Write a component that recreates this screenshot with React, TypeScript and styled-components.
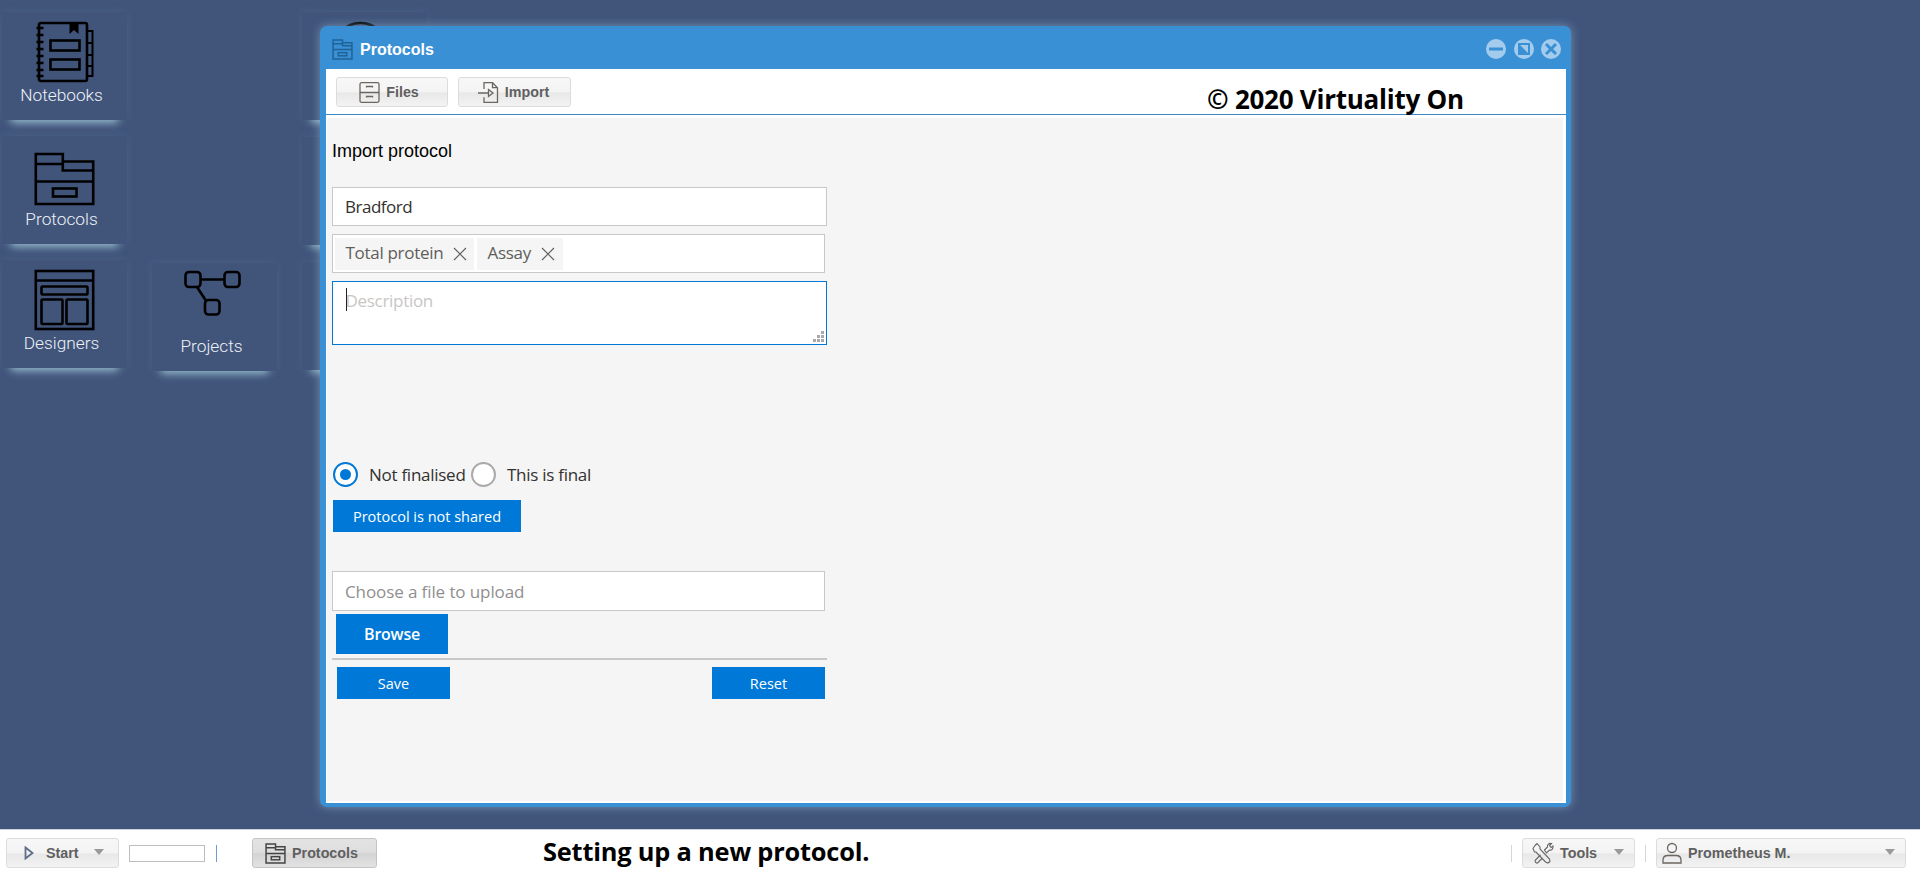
import React from "react";
import styled, { createGlobalStyle } from "styled-components";

const Global = createGlobalStyle`
  html, body { margin: 0; padding: 0; height: 100%; overflow: hidden; }
  #root { height: 100%; }
  * { box-sizing: border-box; }
`;

const Page = styled.div`
  width: 1920px;
  height: 876px;
  display: flex;
  flex-direction: column;
  font-family: "Open Sans", "Liberation Sans", sans-serif;
`;

const Desktop = styled.main`
  position: relative;
  height: 829px;
  background: #41557b;
  overflow: hidden;
  display: flex;
  gap: 25px;
  padding-left: 2px;
`;

const TileColumn = styled.div<{ $top: number; $gap: number }>`
  width: 125px;
  display: flex;
  flex-direction: column;
  gap: ${(p) => p.$gap}px;
  padding-top: ${(p) => p.$top}px;
`;

const Tile = styled.div`
  width: 125px;
  height: 108px;
  background: #41557b;
  box-shadow: 0 12px 8px -9px rgba(165, 205, 220, 0.8), 0 0 9px rgba(120, 150, 180, 0.16);
  padding-top: 4px;
  display: flex;
  flex-direction: column;
  align-items: center;
  flex: none;
`;

const TileIcon = styled.svg`
  width: 64px;
  height: 68px;
  display: block;
  fill: none;
  stroke: #000;
  stroke-width: 2.6;
`;

const TileLabel = styled.div`
  height: 22px;
  line-height: 22px;
  margin-right: 6px;
  font-family: Roboto, sans-serif;
  font-weight: 300;
  font-size: 17.3px;
  color: #eef2f7;
`;

const Window = styled.section`
  position: absolute;
  left: 320px;
  top: 26px;
  width: 1251px;
  height: 781px;
  background: #3a90d4;
  border-radius: 7px;
  box-shadow: 0 0 10px rgba(150, 185, 215, 0.6);
  padding: 0 5px 4px 6px;
  display: flex;
  flex-direction: column;
`;

const TitleBar = styled.header`
  height: 43px;
  flex: none;
  display: flex;
  align-items: center;
  padding-left: 6px;
  padding-top: 4px;
  gap: 7px;
`;

const WindowTitle = styled.div`
  font-family: "Liberation Sans", sans-serif;
  font-weight: 700;
  font-size: 16px;
  color: #fff;
`;

const WindowControls = styled.div`
  margin-left: auto;
  margin-right: 5px;
  margin-top: -1px;
  display: flex;
  gap: 7.5px;
`;

const ControlIcon = styled.svg`
  width: 20px;
  height: 20px;
  display: block;
`;

const WindowBody = styled.div`
  flex: 1;
  background: #fff;
  display: flex;
  flex-direction: column;
  min-height: 0;
`;

const Toolbar = styled.div`
  height: 46px;
  flex: none;
  border-bottom: 1px solid #3f86c4;
  padding: 8px 0 0 10px;
  display: flex;
  gap: 10px;
  position: relative;
`;

const ButtonFace = styled.button<{ $pressed?: boolean; $width: number; $justify?: string; $inset?: number; $gap?: number }>`
  width: ${(p) => p.$width}px;
  height: 30px;
  padding: 0 ${(p) => (p.$justify ? 0 : (p.$inset ?? 0))}px 0 ${(p) => (p.$justify ? (p.$inset ?? 0) : 0)}px;
  gap: ${(p) => p.$gap ?? 6}px;
  border: 1px solid ${(p) => (p.$pressed ? "#c4c4c4" : "#dcdcdc")};
  border-radius: 3px;
  background: ${(p) =>
    p.$pressed
      ? "linear-gradient(#e3e3e3 0, #dedede 48%, #d4d4d4 52%, #e2e2e2 100%)"
      : "linear-gradient(#f7f7f7 0, #f4f4f4 48%, #e8e8e8 54%, #f3f3f3 100%)"};
  display: flex;
  align-items: center;
  justify-content: ${(p) => p.$justify ?? "center"};
  font-family: "Liberation Sans", sans-serif;
  font-weight: 700;
  font-size: 14.3px;
  color: #5f5f5f;
  position: relative;
`;

const ActiveWindowButton = styled(ButtonFace)`
  margin-left: 35px;
`;

const SmallIcon = styled.svg`
  width: 21px;
  height: 21px;
  display: block;
  fill: none;
  stroke: #6b6660;
  stroke-width: 1.3;
  flex: none;
`;

const Copyright = styled.div`
  position: absolute;
  left: 881px;
  top: 14px;
  font-weight: 700;
  font-size: 26px;
  line-height: 33px;
  color: #000;
  white-space: nowrap;
  letter-spacing: -0.25px;
`;

const Content = styled.div`
  flex: 1;
  margin: 3px 3px 2px 1px;
  background: #f5f5f5;
  padding: 0 0 0 5px;
  display: flex;
  flex-direction: column;
  align-items: flex-start;
`;

const Heading = styled.h2`
  margin: 22px 0 0;
  height: 22px;
  line-height: 22px;
  font-family: "Liberation Sans", sans-serif;
  font-weight: 400;
  font-size: 18px;
  color: #000;
`;

const Field = styled.div<{ $width: number; $height?: number; $muted?: boolean }>`
  width: ${(p) => p.$width}px;
  height: ${(p) => p.$height ?? 39}px;
  background: #fff;
  border: 1.5px solid #c8c8c8;
  padding: 0 12px;
  display: flex;
  align-items: center;
  font-size: 17px;
  color: ${(p) => (p.$muted ? "#8f8f8f" : "#323130")};
  letter-spacing: -0.3px;
`;

const NameField = styled(Field)`
  margin-top: 25px;
  letter-spacing: -0.5px;
`;

const TagField = styled(Field)`
  margin-top: 8px;
  padding: 1px 2px;
  gap: 3px;
`;

const Tag = styled.span<{ $width: number }>`
  width: ${(p) => p.$width}px;
  height: 32px;
  background: #f5f5f5;
  color: #605e5c;
  display: flex;
  align-items: center;
  padding: 0 0 2px 10.5px;
  gap: 10px;
  white-space: nowrap;
`;

const TagClose = styled.svg`
  width: 14px;
  height: 14px;
  margin-top: 2px;
  stroke: #605e5c;
  stroke-width: 1.1;
  fill: none;
`;

const DescriptionField = styled.div`
  width: 495px;
  height: 64px;
  margin-top: 8px;
  background: #fff;
  border: 1.5px solid #0078d7;
  position: relative;
  padding: 7px 12.5px;
  font-size: 17px;
  line-height: 23px;
  letter-spacing: -0.3px;
  color: #c8c6c4;
`;

const Caret = styled.span`
  position: absolute;
  left: 12.5px;
  top: 6px;
  width: 1px;
  height: 23px;
  background: #222;
`;

const Grip = styled.svg`
  position: absolute;
  right: 2px;
  bottom: 2px;
  width: 11px;
  height: 11px;
  fill: #a9a9a9;
`;

const RadioRow = styled.div`
  margin-top: 117px;
  margin-left: 1px;
  height: 25px;
  display: flex;
  align-items: center;
`;

const RadioCircle = styled.span<{ $on?: boolean }>`
  width: 25px;
  height: 25px;
  flex: none;
  border-radius: 50%;
  background: #fff;
  border: 2px solid ${(p) => (p.$on ? "#0078d7" : "#aaa")};
  display: flex;
  align-items: center;
  justify-content: center;
  &::after {
    content: "";
    display: ${(p) => (p.$on ? "block" : "none")};
    width: 11px;
    height: 11px;
    border-radius: 50%;
    background: #0078d7;
  }
`;

const RadioText = styled.span<{ $width: number }>`
  width: ${(p) => p.$width}px;
  padding-left: 11px;
  font-size: 17px;
  letter-spacing: -0.27px;
  color: #323130;
  white-space: nowrap;
`;

const PrimaryButton = styled.button<{ $width: number; $height?: number; $size?: number; $bold?: boolean }>`
  width: ${(p) => p.$width}px;
  height: ${(p) => p.$height ?? 32}px;
  border: 0;
  padding: 0;
  background: #0078d7;
  color: #fff;
  font-family: "Open Sans", sans-serif;
  font-size: ${(p) => p.$size ?? 14.5}px;
  font-weight: ${(p) => (p.$bold ? 600 : 400)};
  flex: none;
`;

const ShareButton = styled(PrimaryButton)`
  margin-top: 13px;
  margin-left: 1px;
`;

const UploadField = styled(Field)`
  margin-top: 39px;
  height: 40px;
  letter-spacing: -0.1px;
`;

const BrowseButton = styled(PrimaryButton)`
  margin-top: 3px;
  margin-left: 4px;
  letter-spacing: -0.25px;
`;

const Divider = styled.hr`
  width: 495px;
  height: 2px;
  margin: 4px 0 0 0;
  border: 0;
  background: #c8c8c8;
`;

const FormActions = styled.div`
  width: 488px;
  margin: 7px 0 0 5px;
  display: flex;
  justify-content: space-between;
`;

const Taskbar = styled.footer`
  height: 47px;
  flex: none;
  background: #fff;
  border-top: 1px solid #c9d0da;
  display: flex;
  align-items: flex-start;
  padding: 8px 14px 0 6px;
  position: relative;
`;

const DropCaret = styled.span<{ $right: number }>`
  position: absolute;
  right: ${(p) => p.$right}px;
  top: 10px;
  width: 0;
  height: 0;
  border-left: 5.5px solid transparent;
  border-right: 5.5px solid transparent;
  border-top: 6px solid #999;
`;

const TaskInput = styled.div`
  width: 76px;
  height: 17px;
  margin: 7px 0 0 10px;
  border: 1px solid #bdbdbd;
  background: #fff;
`;

const BarDivider = styled.span<{ $color: string; $left: number; $right?: number }>`
  width: 1px;
  height: 17px;
  margin: 7px ${(p) => p.$right ?? 0}px 0 ${(p) => p.$left}px;
  background: ${(p) => p.$color};
  flex: none;
`;

const Caption = styled.div`
  position: absolute;
  left: 543px;
  top: 5px;
  font-weight: 700;
  font-size: 25.4px;
  line-height: 33px;
  color: #000;
  white-space: nowrap;
  letter-spacing: -0.2px;
`;

const Spacer = styled.div`
  flex: 1;
`;

const FileCabinet = () => (
  <SmallIcon viewBox="0 0 21 21">
    <rect x="1" y="0.700" width="19" height="19.600" rx="1.500" />
    <path d="M1 10.500h19M7.500 5.500V4.500h6v1M7.500 15.500v-1h6v1" />
  </SmallIcon>
);

const ImportIcon = () => (
  <SmallIcon viewBox="0 0 21 21">
    <path d="M6 7V.7h8.500l5 5V20.300H6v-5" />
    <path d="M14.500.7v5h5M0 11h11" />
    <path d="M10.500 7.500l4.500 3.500-4.500 3.500z" />
  </SmallIcon>
);

const DrawerFolder = ({ color }: { color: string }) => (
  <SmallIcon viewBox="0 0 20 20" style={{ stroke: color }}>
    <path d="M1 1h9v2.500h9V19H1zM1 4.500h9M10 1v5.500h9M1 10h18" strokeWidth="1.400" />
    <rect x="6" y="13" width="8" height="3" strokeWidth="1.400" />
  </SmallIcon>
);

const StartIcon = () => (
  <SmallIcon viewBox="0 0 14 14" style={{ width: 14, height: 14 }}>
    <path d="M3.500 1.500L10.500 7l-7 5.500z" stroke="#5f6e88" strokeWidth="1.800" />
  </SmallIcon>
);

const ToolsIcon = () => (
  <SmallIcon viewBox="0 0 22 22" style={{ width: 22, height: 22 }}>
    <path
      d="M3 3.500L5 1.500l3 3.500v2l9.500 10 .5 2.500-2 1.500-2.500-1L4 10H2.500L1 6.500zM12.500 8l3-3c-.5-2 1-4 4-3.500l-2 2 1.500 2 2-1.500c.5 3-1.500 4.500-3.500 4l-3 3zM8.500 13l-5 5c-1 1 0 3.500 2 3l5-5"
      stroke="#666"
      strokeWidth="1.100"
    />
  </SmallIcon>
);

const UserIcon = () => (
  <SmallIcon viewBox="0 0 20 22" style={{ width: 20, height: 22 }}>
    <circle cx="10" cy="6" r="4.500" />
    <path d="M1 21v-3c0-3 2-4.500 5-4.500h8c3 0 5 1.500 5 4.500v3z" />
  </SmallIcon>
);

const X = () => (
  <TagClose viewBox="0 0 14 14">
    <path d="M1 1l12 12M13 1L1 13" />
  </TagClose>
);

export default function App() {
  return (
    <Page>
      <Global />
      <Desktop>
        <TileColumn $top={12} $gap={16}>
          <Tile>
            <TileIcon viewBox="32.5 16 64 68">
              <rect x="38.500" y="23" width="48" height="58" rx="2" />
              <path d="M69 23h9v11l-4.500-4-4.500 4z" fill="#000" stroke="none" />
              <rect x="50" y="40.500" width="29" height="10" />
              <rect x="50" y="59.500" width="29" height="10" />
              <path d="M36 28h7M36 35h7M36 42h7M36 49h7M36 56h7M36 63h7M36 70h7M36 76h7" />
              <path d="M87 31h5v45h-5M87 43h5M87 55h5M87 66h5" strokeWidth="2" />
            </TileIcon>
            <TileLabel>Notebooks</TileLabel>
          </Tile>
          <Tile>
            <TileIcon viewBox="32.5 140 64 68">
              <path d="M35.300 154h27v7.500h30.400V204H35.300zM35.300 164h27M62.300 161.500v9h30.400M35.300 181.500h57.400" />
              <rect x="52.500" y="188.500" width="23.500" height="8" />
            </TileIcon>
            <TileLabel>Protocols</TileLabel>
          </Tile>
          <Tile>
            <TileIcon viewBox="32.5 263 64 68">
              <rect x="35.300" y="270" width="57.400" height="58" />
              <path d="M35.300 279.500h57.400" />
              <rect x="41" y="285.500" width="46" height="8" rx="1" />
              <rect x="41" y="298.500" width="21" height="24.500" rx="1" />
              <rect x="66" y="298.500" width="21" height="24.500" rx="1" />
            </TileIcon>
            <TileLabel>Designers</TileLabel>
          </Tile>
        </TileColumn>
        <TileColumn $top={263} $gap={16}>
          <Tile>
            <TileIcon viewBox="182.500 267 64 68">
              <rect x="185" y="272" width="15" height="15" rx="3.500" />
              <rect x="224" y="272" width="15" height="15" rx="3.500" />
              <rect x="204.500" y="300" width="14.500" height="14.500" rx="3.500" />
              <path d="M200 279.500h24M196.500 287l8.500 13" />
            </TileIcon>
            <TileLabel>Projects</TileLabel>
          </Tile>
        </TileColumn>
        <TileColumn $top={12} $gap={17}>
          <Tile>
            <TileIcon viewBox="332.500 16 64 68">
              <circle cx="360" cy="50" r="27" />
            </TileIcon>
          </Tile>
          <Tile />
          <Tile />
        </TileColumn>

        <Window>
          <TitleBar>
            <DrawerFolder color="#1f6296" />
            <WindowTitle>Protocols</WindowTitle>
            <WindowControls>
              <ControlIcon viewBox="0 0 20 20">
                <circle cx="10" cy="10" r="10" fill="#a3cbee" />
                <path d="M3 10h14" stroke="#3a90d4" strokeWidth="3" />
              </ControlIcon>
              <ControlIcon viewBox="0 0 20 20">
                <circle cx="10" cy="10" r="10" fill="#a3cbee" />
                <rect x="5" y="5" width="10" height="10" fill="none" stroke="#3a90d4" strokeWidth="2" />
                <path d="M5 5l10 10H5z" fill="#3a90d4" />
              </ControlIcon>
              <ControlIcon viewBox="0 0 20 20">
                <circle cx="10" cy="10" r="10" fill="#a3cbee" />
                <path d="M5 5l10 10M15 5L5 15" stroke="#3a90d4" strokeWidth="3" />
              </ControlIcon>
            </WindowControls>
          </TitleBar>
          <WindowBody>
            <Toolbar>
              <ButtonFace $width={112} $inset={6}>
                <FileCabinet />
                Files
              </ButtonFace>
              <ButtonFace $width={113} $inset={2}>
                <ImportIcon />
                Import
              </ButtonFace>
              <Copyright>© 2020 Virtuality On</Copyright>
            </Toolbar>
            <Content>
              <Heading>Import protocol</Heading>
              <NameField $width={495}>Bradford</NameField>
              <TagField $width={493}>
                <Tag $width={139}>
                  Total protein <X />
                </Tag>
                <Tag $width={86}>
                  Assay <X />
                </Tag>
              </TagField>
              <DescriptionField>
                <Caret />
                Description
                <Grip viewBox="0 0 11 11">
                  <rect x="8" y="0" width="3" height="3" />
                  <rect x="4" y="4" width="3" height="3" />
                  <rect x="8" y="4" width="3" height="3" />
                  <rect x="0" y="8" width="3" height="3" />
                  <rect x="4" y="8" width="3" height="3" />
                  <rect x="8" y="8" width="3" height="3" />
                </Grip>
              </DescriptionField>
              <RadioRow>
                <RadioCircle $on />
                <RadioText $width={113}>Not finalised</RadioText>
                <RadioCircle />
                <RadioText $width={100}>This is final</RadioText>
              </RadioRow>
              <ShareButton $width={188}>Protocol is not shared</ShareButton>
              <UploadField $width={493} $muted>
                Choose a file to upload
              </UploadField>
              <BrowseButton $width={112} $height={40} $size={16} $bold>
                Browse
              </BrowseButton>
              <Divider />
              <FormActions>
                <PrimaryButton $width={113}>Save</PrimaryButton>
                <PrimaryButton $width={113}>Reset</PrimaryButton>
              </FormActions>
            </Content>
          </WindowBody>
        </Window>
      </Desktop>
      <Taskbar>
        <ButtonFace $width={113} $justify="flex-start" $inset={15} $gap={10}>
          <StartIcon />
          Start
          <DropCaret $right={14} />
        </ButtonFace>
        <TaskInput />
        <BarDivider $color="#6c9bd6" $left={11} />
        <ActiveWindowButton $pressed $width={125} $inset={6}>
          <DrawerFolder color="#444" />
          Protocols
        </ActiveWindowButton>
        <Caption>Setting up a new protocol.</Caption>
        <Spacer />
        <BarDivider $color="#d6d6d6" $left={0} $right={10} />
        <ButtonFace $width={113} $justify="flex-start" $inset={9}>
          <ToolsIcon />
          Tools
          <DropCaret $right={10} />
        </ButtonFace>
        <BarDivider $color="#d6d6d6" $left={10} $right={10} />
        <ButtonFace $width={250} $justify="flex-start" $inset={5} $gap={6}>
          <UserIcon />
          Prometheus M.
          <DropCaret $right={10} />
        </ButtonFace>
      </Taskbar>
    </Page>
  );
}
